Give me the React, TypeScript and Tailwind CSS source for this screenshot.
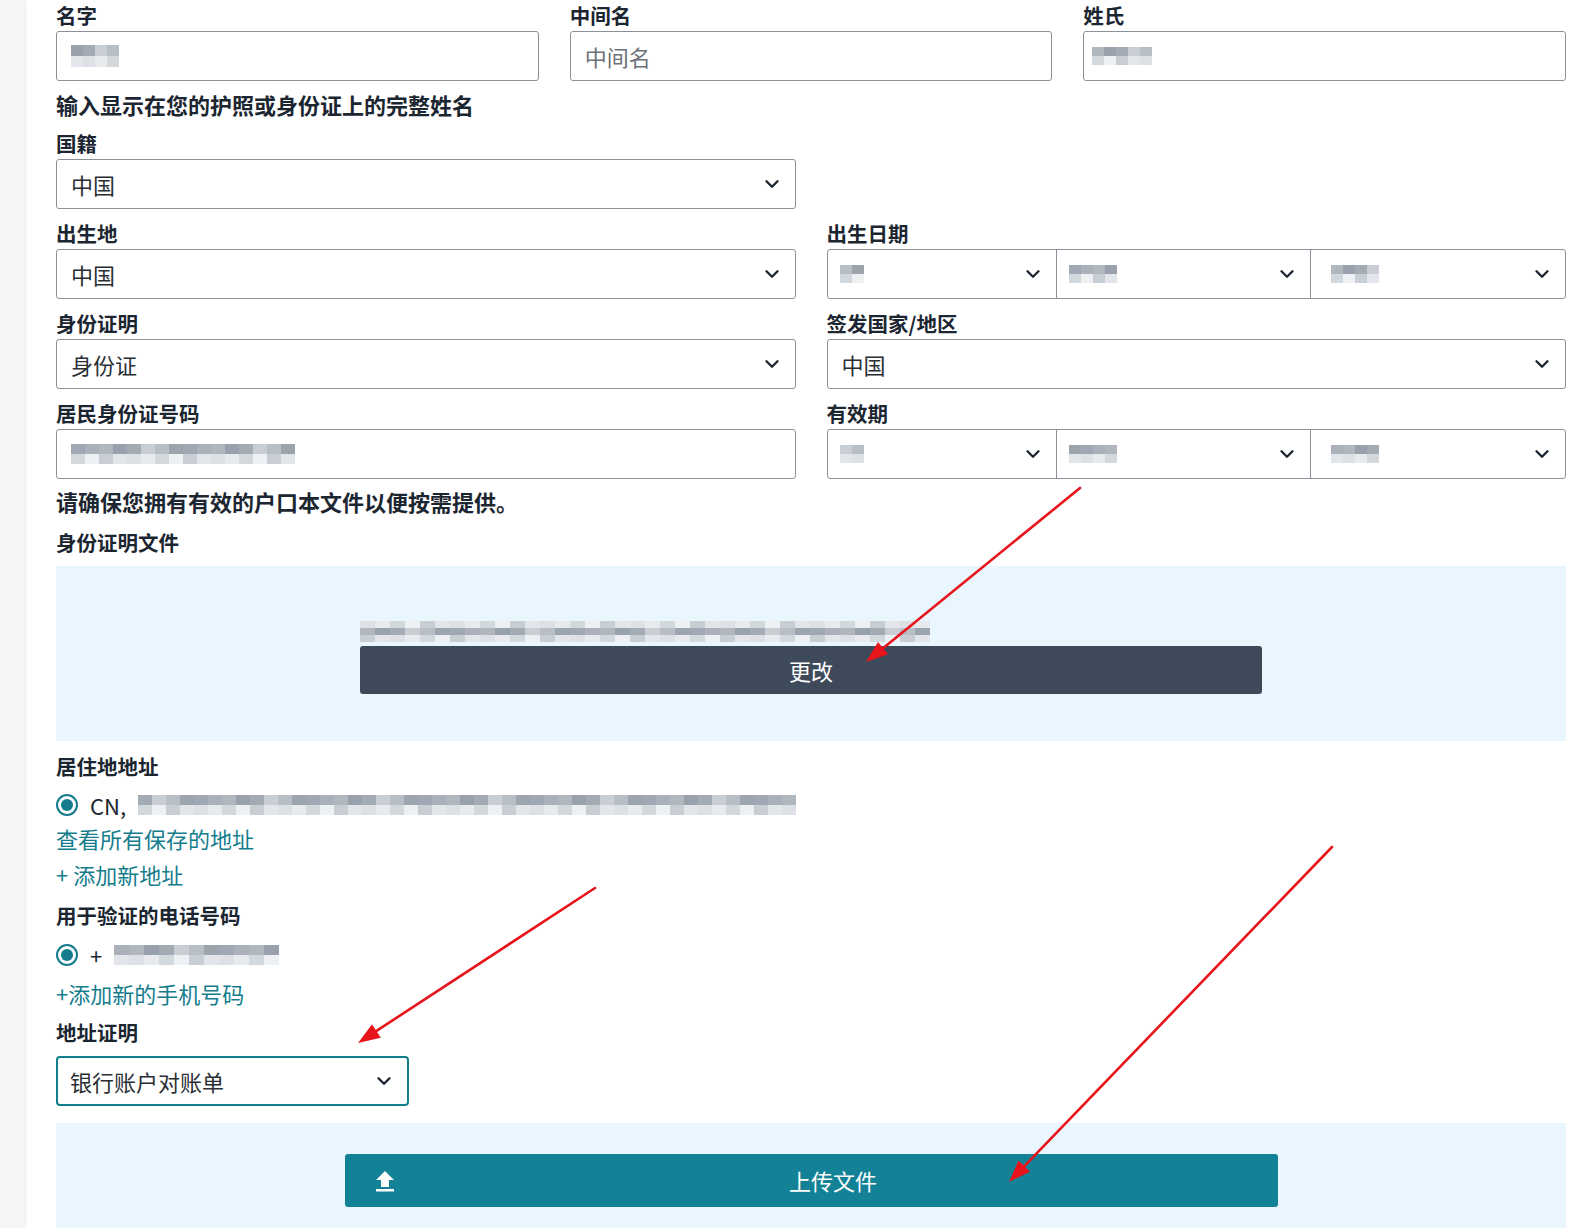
import React from 'react';
import { ChevronDown } from 'lucide-react';

const PAL = [
  'bg-[#aab1ba]',
  'bg-[#a0a8b3]',
  'bg-[#9ca4ae]',
  'bg-[#b8bec6]',
  'bg-[#c9ced4]',
  'bg-[#a3abb5]',
  'bg-[#98a1ac]',
  'bg-[#b1b7bf]',
];
const PAL_LIGHT = [
  'bg-[#dde1e6]',
  'bg-[#e8ebee]',
  'bg-[#d3d8dd]',
  'bg-[#eef1f4]',
  'bg-[#c9ced4]',
  'bg-[#e2e6ea]',
];

function Mosaic({ cells, rows = 2, cellW = 'w-[14px]', cellH = 'h-[11px]', seed = 1, lightTop = false }: { cells: number; rows?: number; cellW?: string; cellH?: string; seed?: number; lightTop?: boolean }) {
  const rs = Array.from({ length: rows });
  return (
    <div className="flex flex-col">
      {rs.map((_, r) => (
        <div key={r} className="flex">
          {Array.from({ length: cells }).map((__, i) => {
            const light = (lightTop && r === 0) || r === rows - 1;
            const arr = light ? PAL_LIGHT : PAL;
            const cls = arr[(i * 7 + seed * 3 + r * 5) % arr.length];
            return <div key={i} className={`${cellW} ${cellH} ${cls}`} />;
          })}
        </div>
      ))}
    </div>
  );
}

function Label({ children }: { children: React.ReactNode }) {
  return <div className="h-[31px] leading-[31px] text-[20.5px] font-bold text-[#1b2631] whitespace-nowrap">{children}</div>;
}

function Chevron() {
  return <ChevronDown size={22} strokeWidth={2.6} className="text-[#1b2631] shrink-0" />;
}

function Select({ value }: { value: React.ReactNode }) {
  return (
    <div className="h-[50px] border border-[#8c9199] rounded-[3px] flex items-center justify-between pl-[14px] pr-[12px] text-[22px] text-[#2a2f35] bg-white">
      <span>{value}</span>
      <Chevron />
    </div>
  );
}

function DateGroup({ seed }: { seed: number }) {
  return (
    <div className="h-[50px] border border-[#8c9199] rounded-[3px] grid grid-cols-[228px_1fr_1fr] bg-white">
      <div className="flex items-center justify-between pl-[12px] pr-[12px]">
        <Mosaic cells={2} rows={2} cellW="w-[12px]" cellH="h-[9px]" seed={seed} />
        <Chevron />
      </div>
      <div className="border-l border-[#8c9199] flex items-center justify-between pl-[12px] pr-[12px]">
        <Mosaic cells={4} rows={2} cellW="w-[12px]" cellH="h-[9px]" seed={seed + 2} />
        <Chevron />
      </div>
      <div className="border-l border-[#8c9199] flex items-center justify-between pl-[20px] pr-[12px]">
        <Mosaic cells={4} rows={2} cellW="w-[12px]" cellH="h-[9px]" seed={seed + 4} />
        <Chevron />
      </div>
    </div>
  );
}

function Radio() {
  return (
    <div className="w-[22px] h-[22px] rounded-full border-2 border-[#137b8a] flex items-center justify-center shrink-0">
      <div className="w-[12px] h-[12px] rounded-full bg-[#137b8a]" />
    </div>
  );
}

function Arrow({ x1, y1, x2, y2 }: { x1: number; y1: number; x2: number; y2: number }) {
  const dx = x2 - x1;
  const dy = y2 - y1;
  const len = Math.sqrt(dx * dx + dy * dy);
  const ux = dx / len;
  const uy = dy / len;
  const hl = 22;
  const hw = 8;
  const bx = x2 - ux * hl;
  const by = y2 - uy * hl;
  const px = -uy;
  const py = ux;
  const pts = `${x2},${y2} ${bx + px * hw},${by + py * hw} ${bx - px * hw},${by - py * hw}`;
  return (
    <g>
      <line x1={x1} y1={y1} x2={bx + ux * 4} y2={by + uy * 4} stroke="#e8141c" strokeWidth={2.6} strokeLinecap="round" />
      <polygon points={pts} fill="#e8141c" />
    </g>
  );
}

export default function App() {
  return (
    <div className="relative flex h-[1228px] bg-white font-['Noto_Sans_CJK_SC','Noto_Sans',sans-serif] overflow-hidden">
      <div className="w-[24px] shrink-0 bg-[#f6f6f6] shadow-[1px_0_4px_rgba(0,0,0,0.10)]" />
      <div className="w-[1510px] shrink-0 ml-[32px]">
        {/* Name row */}
        <div className="grid grid-cols-3 gap-x-[31px]">
          <div>
            <Label>名字</Label>
            <div className="h-[50px] border border-[#8c9199] rounded-[3px] flex items-center pl-[14px]">
              <Mosaic cells={4} rows={2} cellW="w-[12px]" cellH="h-[11px]" seed={2} />
            </div>
          </div>
          <div>
            <Label>中间名</Label>
            <div className="h-[50px] border border-[#8c9199] rounded-[3px] flex items-center pl-[14px] text-[22px] text-[#6b7079]">中间名</div>
          </div>
          <div>
            <Label>姓氏</Label>
            <div className="h-[50px] border border-[#8c9199] rounded-[3px] flex items-center pl-[8px]">
              <Mosaic cells={5} rows={2} cellW="w-[12px]" cellH="h-[9px]" seed={5} />
            </div>
          </div>
        </div>

        <div className="mt-[8px] h-[30px] leading-[30px] text-[22px] font-bold text-[#1b2631]">输入显示在您的护照或身份证上的完整姓名</div>

        <div className="grid grid-cols-2 gap-x-[31px]">
          <div className="mt-[9px]">
            <Label>国籍</Label>
            <Select value="中国" />
          </div>
          <div />
          <div className="mt-[9px]">
            <Label>出生地</Label>
            <Select value="中国" />
          </div>
          <div className="mt-[9px]">
            <Label>出生日期</Label>
            <DateGroup seed={1} />
          </div>
          <div className="mt-[9px]">
            <Label>身份证明</Label>
            <Select value="身份证" />
          </div>
          <div className="mt-[9px]">
            <Label>签发国家/地区</Label>
            <Select value="中国" />
          </div>
          <div className="mt-[9px]">
            <Label>居民身份证号码</Label>
            <div className="h-[50px] border border-[#8c9199] rounded-[3px] flex items-center pl-[14px]">
              <Mosaic cells={16} rows={2} cellW="w-[14px]" cellH="h-[10px]" seed={3} />
            </div>
          </div>
          <div className="mt-[9px]">
            <Label>有效期</Label>
            <DateGroup seed={4} />
          </div>
        </div>

        <div className="mt-[7px] h-[30px] leading-[30px] text-[22px] font-bold text-[#1b2631]">请确保您拥有有效的户口本文件以便按需提供。</div>

        <div className="mt-[11px]">
          <Label>身份证明文件</Label>
        </div>

        <div className="mt-[8px] h-[175px] bg-[#eaf6fe] flex flex-col items-center pt-[55px]">
          <div className="w-[902px]">
            <div className="w-[576px]">
              <Mosaic cells={38} rows={3} cellW="w-[15px]" cellH="h-[7px]" seed={6} lightTop />
            </div>
            <div className="mt-[4px] h-[48px] rounded-[3px] bg-[#3e4a59] flex items-center justify-center text-white text-[22px]">更改</div>
          </div>
        </div>

        <div className="mt-[10px]">
          <Label>居住地地址</Label>
        </div>
        <div className="mt-[8px] h-[30px] flex items-center gap-[12px]">
          <Radio />
          <span className="text-[22px] text-[#1b2631]">CN,</span>
          <Mosaic cells={47} rows={2} cellW="w-[14px]" cellH="h-[10px]" seed={7} />
        </div>
        <div className="mt-[3px] h-[30px] leading-[30px] text-[22px] text-[#147d8c]">查看所有保存的地址</div>
        <div className="mt-[6px] h-[30px] leading-[30px] text-[22px] text-[#147d8c]">+ 添加新地址</div>

        <div className="mt-[11px]">
          <Label>用于验证的电话号码</Label>
        </div>
        <div className="mt-[9px] h-[30px] flex items-center gap-[12px]">
          <Radio />
          <span className="text-[22px] text-[#1b2631]">+</span>
          <Mosaic cells={11} rows={2} cellW="w-[15px]" cellH="h-[10px]" seed={8} />
        </div>
        <div className="mt-[8px] h-[30px] leading-[30px] text-[22px] text-[#147d8c]">+添加新的手机号码</div>

        <div className="mt-[9px]">
          <Label>地址证明</Label>
        </div>
        <div className="mt-[8px] w-[353px] h-[50px] border-2 border-[#0f7f8c] rounded-[4px] flex items-center justify-between pl-[12px] pr-[12px] text-[22px] text-[#2a2f35]">
          <span>银行账户对账单</span>
          <Chevron />
        </div>

        <div className="mt-[17px] bg-[#eaf6fe] pt-[31px] pb-[60px] flex justify-center">
          <div className="w-[933px] h-[53px] rounded-[3px] bg-[#138296] flex items-center text-white text-[22px]">
            <svg width="20" height="22" viewBox="0 0 20 22" className="ml-[30px] shrink-0">
              <polygon points="10,1 19,10 14,10 14,17 6,17 6,10 1,10" fill="white" />
              <rect x="1" y="19" width="18" height="2.5" fill="white" />
            </svg>
            <span className="flex-1 text-center pr-[6px]">上传文件</span>
          </div>
        </div>
      </div>

      <svg className="absolute inset-0 pointer-events-none" width="1582" height="1228" viewBox="0 0 1582 1228">
        <Arrow x1={1080} y1={488} x2={866} y2={662} />
        <Arrow x1={595} y1={888} x2={358} y2={1043} />
        <Arrow x1={1332} y1={847} x2={1009} y2={1182} />
      </svg>
    </div>
  );
}
